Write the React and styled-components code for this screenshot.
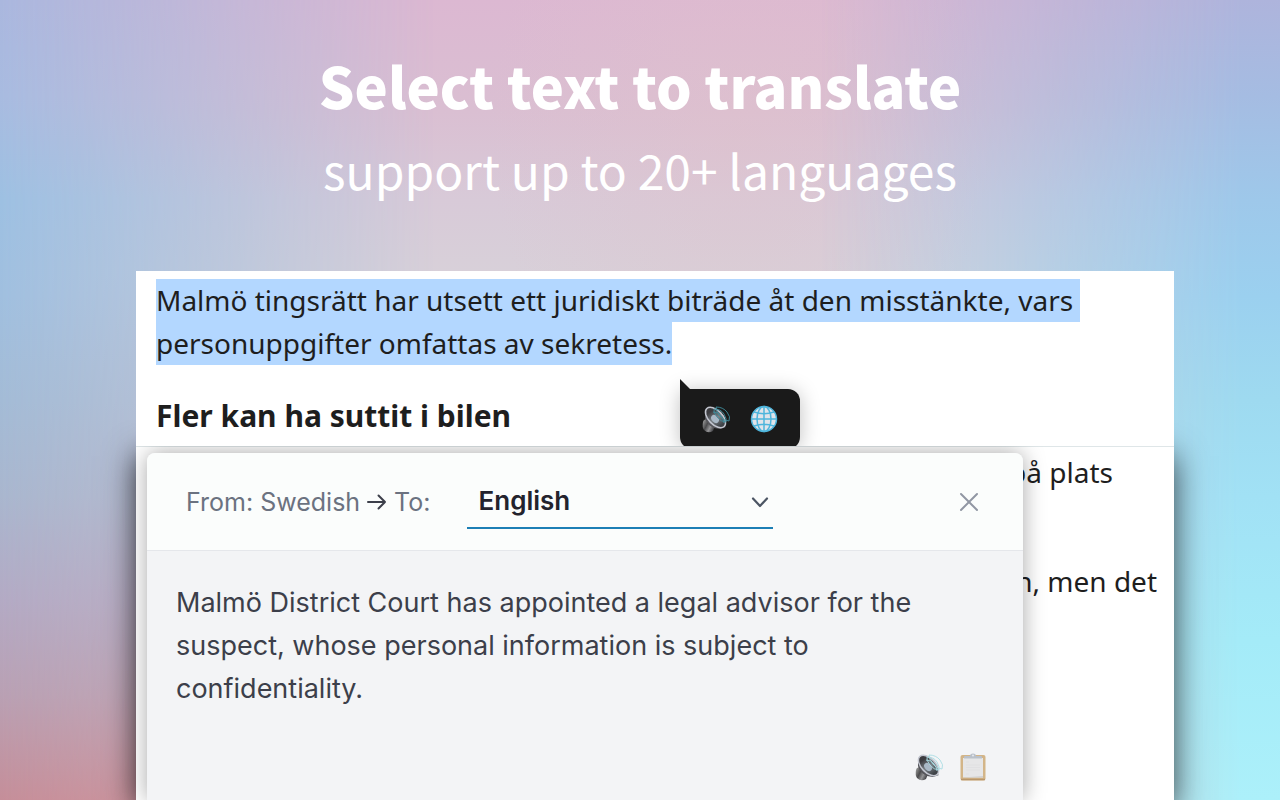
import { useId } from "react";
import styled, { createGlobalStyle } from "styled-components";

const GlobalStyle = createGlobalStyle`
  * {
    box-sizing: border-box;
  }

  body {
    margin: 0;
  }
`;

const Page = styled.main`
  position: relative;
  z-index: 0;
  display: flex;
  flex-direction: column;
  height: 100vh;
  overflow: hidden;
  background:
    radial-gradient(ellipse 20% 40% at 58% 16%, rgba(226, 194, 202, 0.4), rgba(226, 194, 202, 0)),
    linear-gradient(#dcb8d2 0%, #dabfd2 14%, #d8cad8 25%, #d8d0d9 34%, #cac2d2 62%, #c6b6c4 80%, #d8a4ac 100%);

  &::before,
  &::after {
    position: absolute;
    inset: 0;
    z-index: -1;
    content: "";
  }

  &::before {
    background: linear-gradient(#aab7de, #a8bbe0 12%, #9dc0e2 25%, #a0bfdf 37%, #a3bbd6 50%, #a9b6ce 62%, #b3aac4 75%, #b9a0b3 87%, #c58e99);
    mask-image: linear-gradient(to right, #000, transparent 34%);
  }

  &::after {
    background: linear-gradient(#aeb4dc, #a5bce2 12%, #9ec8ea 25%, #9bd0ef 37%, #9edaf0 50%, #a1e1f5 62%, #a4ebf8 80%, #acf0fa);
    mask-image: linear-gradient(to left, #000 3%, transparent 36%);
  }
`;

const Hero = styled.header`
  padding: 37px 0 0;
  color: #fff;
  font-family: "Noto Sans CJK SC", sans-serif;
  text-align: center;
`;

const Title = styled.h1`
  margin: 0;
  font-size: 56px;
  font-weight: 900;
  line-height: 96px;
`;

const Subtitle = styled.p`
  margin: 0;
  font-size: 48px;
  font-weight: 400;
  line-height: 72px;
`;

const Stage = styled.div`
  display: flex;
  flex: 1;
  flex-direction: column;
  margin: 66px 106px 0 136px;
  color: #1e1e1e;
  font-family: "Noto Sans", sans-serif;
`;

const Article = styled.section`
  position: relative;
  z-index: 1;
  height: 175px;
  padding: 8px 20px 0;
  overflow: hidden;
  background: #fff;
`;

const Quote = styled.p`
  margin: 0;
  font-size: 28px;
  line-height: 43px;
`;

const Selected = styled.mark`
  display: block;
  width: fit-content;
  background: #b3d7ff;
  color: inherit;
  white-space: pre;
`;

const Heading = styled.h2`
  margin: 29px 0 0;
  font-size: 30px;
  font-weight: 700;
  line-height: 44px;
`;

const Bubble = styled.div`
  position: absolute;
  top: 118px;
  left: 544px;
  display: flex;
  gap: 18px;
  align-items: center;
  justify-content: center;
  width: 120px;
  height: 60px;
  border-radius: 0 12px 12px 12px;
  background: #1a1a1a;
  box-shadow: 0 2px 20px rgba(0, 0, 0, 0.25);

  &::before {
    position: absolute;
    top: -10px;
    left: 0;
    border-bottom: 10px solid #1a1a1a;
    border-right: 10px solid transparent;
    content: "";
  }
`;

const IconButton = styled.button`
  display: flex;
  padding: 0;
  border: 0;
  background: none;
  cursor: pointer;
`;

const Lower = styled.section`
  position: relative;
  flex: 1;
  padding: 4px 17px 0;
  border-top: 1px solid #dfe6e8;
  background: #fff;
  box-shadow: 0 10px 30px rgba(0, 0, 0, 0.7);
`;

const Line = styled.p`
  margin: 0 ${(p) => p.$inset || 0}px 66px 0;
  font-size: 28px;
  line-height: 43px;
  text-align: right;
`;

const Popup = styled.div`
  position: absolute;
  top: 6px;
  right: 151px;
  bottom: 0;
  left: 11px;
  display: flex;
  flex-direction: column;
  border-radius: 8px 8px 0 0;
  background: #f3f4f6;
  box-shadow: 0 0 22px rgba(0, 0, 0, 0.35);
  font-family: Inter, sans-serif;
`;

const PopupBar = styled.div`
  display: flex;
  align-items: center;
  height: 98px;
  padding: 0 42px 0 39px;
  border-bottom: 1px solid #e5e7eb;
  border-radius: 8px 8px 0 0;
  background: #fbfdfc;
`;

const Label = styled.label`
  display: flex;
  gap: 7px;
  align-items: center;
  color: #6b7280;
  font-size: 25px;
`;

const SelectBox = styled.div`
  display: grid;
  align-items: center;
  width: 306px;
  margin: 0 auto 0 36px;

  > * {
    grid-area: 1 / 1;
  }

  svg {
    justify-self: end;
    margin-right: 3px;
    pointer-events: none;
  }
`;

const Select = styled.select`
  height: 54px;
  padding: 0 12px;
  border: 0;
  border-bottom: 2px solid #1c7fb5;
  appearance: none;
  background: none;
  color: #23232d;
  font-family: Inter, sans-serif;
  font-size: 26px;
  font-weight: 600;
`;

const Result = styled.p`
  margin: 0;
  padding: 30px 60px 0 29px;
  color: #3c3f4a;
  font-size: 27px;
  line-height: 43px;
`;

const Actions = styled.div`
  display: flex;
  gap: 14px;
  justify-content: flex-end;
  padding: 42px 35px 0;
`;

function SpeakerIcon({ wave }) {
  const id = useId();
  return (
    <svg width="30" height="30" viewBox="0 0 30 30" fill="none" aria-hidden="true">
      <defs>
        <linearGradient id={id + "body"} x1="2" y1="18" x2="14" y2="24" gradientUnits="userSpaceOnUse">
          <stop offset="0" stopColor="#929292" />
          <stop offset="0.35" stopColor="#4b4b4d" />
          <stop offset="0.65" stopColor="#949496" />
          <stop offset="1" stopColor="#343438" />
        </linearGradient>
        <linearGradient id={id + "cone"} x1="7" y1="12" x2="24" y2="15" gradientUnits="userSpaceOnUse">
          <stop offset="0" stopColor="#3c3c40" />
          <stop offset="0.5" stopColor="#7b8288" />
          <stop offset="1" stopColor="#3f4348" />
        </linearGradient>
      </defs>
      <path d="M2 18q0-2 3-3l9 7-2 5q-5 3-9-1-2-3-1-8Z" fill={`url(#${id}body)`} />
      <path d="m4 10 0 4q2 7 9 10l6 1 6-2-8-5Z" fill="#56565b" />
      <ellipse cx="14.500" cy="13.500" rx="12.500" ry="7" transform="rotate(46 14.500 13.500)" fill={`url(#${id}cone)`} stroke="#c3c6d0" strokeWidth="1.500" />
      <ellipse cx="14" cy="15" rx="4.500" ry="3.200" transform="rotate(46 14 15)" fill="#a9b8c6" />
      <g stroke={wave} strokeWidth="0.900">
        <path d="M12 8q5 0 8 4t3 7" />
        <path d="M13 5q7 0 10 5t2 8q-5 0-9-5t-3-8Z" />
        <path d="M15 3q7 0 11 5t2 9q-5 0-9-5t-4-9Z" />
      </g>
    </svg>
  );
}

function GlobeIcon() {
  return (
    <svg width="30" height="30" viewBox="0 0 30 30" fill="none" aria-hidden="true">
      <circle cx="15" cy="15" r="12.500" fill="#e1e4ea" />
      <g stroke="#4eb5dc" strokeWidth="1.500">
        <circle cx="15" cy="15" r="12.500" />
        <ellipse cx="15" cy="15" rx="7" ry="12.500" />
        <path d="M15 2.500v25M2.500 15h25M5 8q10 3.500 20 0M5 22q10-3.500 20 0" />
      </g>
    </svg>
  );
}

function ClipboardIcon() {
  return (
    <svg width="30" height="30" viewBox="0 0 30 30" fill="none" aria-hidden="true">
      <rect x="2.500" y="3" width="25" height="25.500" rx="2" fill="#d3b588" />
      <path d="M3 27.500h24" stroke="#b8976c" strokeWidth="1.500" />
      <path d="M5 6h20v19.500H5Z" fill="#e6e6e7" />
      <path d="M5 25.500h20V24Z" fill="#cfcfd1" />
      <path d="M8 10h3M8 13h14M8 15.500h14M8 18h14M8 22h3" stroke="#dedee1" strokeWidth="0.800" />
      <path d="M6 6.500V5q0-1 1-1h5q0-2.500 3-2.500t3 2.500h5q1 0 1 1v1.500Z" fill="#bac1ca" />
      <circle cx="15" cy="3.500" r="1" fill="#e6eaf0" />
    </svg>
  );
}

function App() {
  return (
    <Page>
      <GlobalStyle />
      <Hero>
        <Title>Select text to translate</Title>
        <Subtitle>support up to 20+ languages</Subtitle>
      </Hero>
      <Stage>
        <Article lang="sv">
          <Quote>
            <Selected>{"Malmö tingsrätt har utsett ett juridiskt biträde åt den misstänkte, vars "}</Selected>
            <Selected>personuppgifter omfattas av sekretess.</Selected>
          </Quote>
          <Heading>Fler kan ha suttit i bilen</Heading>
          <Bubble>
            <IconButton type="button" aria-label="Listen to selection">
              <SpeakerIcon wave="#3f8d9d" />
            </IconButton>
            <IconButton type="button" aria-label="Translate selection">
              <GlobeIcon />
            </IconButton>
          </Bubble>
        </Article>
        <Lower>
          <Line lang="sv" $inset={44}>på plats</Line>
          <Line lang="sv">n, men det</Line>
          <Popup>
            <PopupBar>
              <Label htmlFor="target">
                From: Swedish
                <svg width="20" height="20" viewBox="0 0 20 20" fill="none" stroke="#3c3f4a" strokeWidth="2" strokeLinecap="round" strokeLinejoin="round" aria-hidden="true">
                  <path d="M1 10h17M11.500 3.500 18 10l-6.500 6.500" />
                </svg>
                To:
              </Label>
              <SelectBox>
                <Select id="target" defaultValue="en">
                  <option value="en">English</option>
                </Select>
                <svg width="20" height="20" viewBox="0 0 20 20" fill="none" stroke="#4b5563" strokeWidth="2.200" strokeLinecap="round" strokeLinejoin="round" aria-hidden="true">
                  <path d="m3 6.500 7 7.500 7-7.500" />
                </svg>
              </SelectBox>
              <IconButton type="button" aria-label="Close">
                <svg width="24" height="24" viewBox="0 0 24 24" stroke="#9197a3" strokeWidth="2" strokeLinecap="round" aria-hidden="true">
                  <path d="m4 4 16 16M20 4 4 20" />
                </svg>
              </IconButton>
            </PopupBar>
            <Result>
              Malmö District Court has appointed a legal advisor for the suspect, whose personal
              information is subject to confidentiality.
            </Result>
            <Actions>
              <IconButton type="button" aria-label="Listen to translation">
                <SpeakerIcon wave="#a9dde3" />
              </IconButton>
              <IconButton type="button" aria-label="Copy translation">
                <ClipboardIcon />
              </IconButton>
            </Actions>
          </Popup>
        </Lower>
      </Stage>
    </Page>
  );
}

export default App;
